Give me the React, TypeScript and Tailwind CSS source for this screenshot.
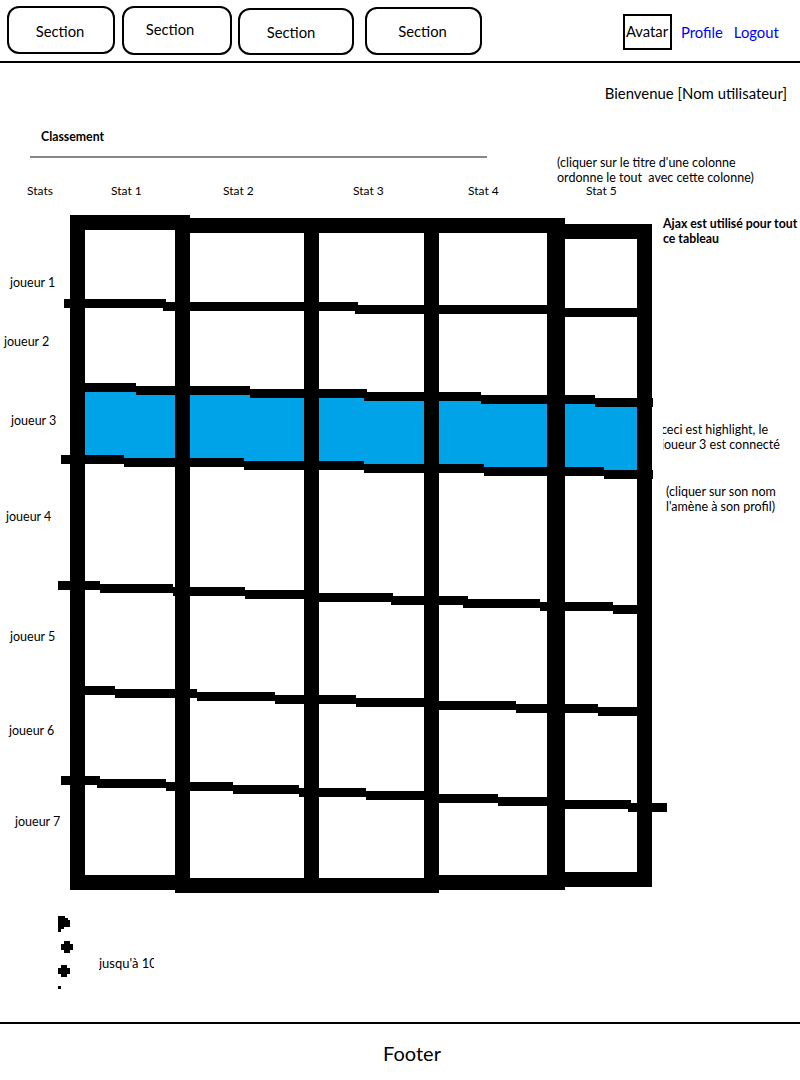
const bars: [number, number, number, number][] = [
  // outer frame, top
  [70, 215, 120, 15], [190, 218, 375, 15], [565, 224, 87, 15],
  // outer frame, bottom
  [70, 875, 105, 15], [175, 878, 264, 15], [439, 875, 126, 15], [565, 872, 87, 15],
  // verticals
  [70, 215, 15, 675], [175, 215, 15, 678], [304, 218, 15, 675], [424, 218, 15, 675], [547, 218, 18, 672], [637, 224, 15, 663],
  // row 1
  [64, 299, 102, 9], [163, 302, 195, 9], [355, 305, 192, 9], [565, 308, 72, 9],
  // row 2
  [85, 383, 51, 9], [136, 386, 114, 9], [250, 389, 117, 9], [364, 392, 117, 9], [481, 395, 66, 9], [565, 395, 30, 9], [595, 398, 58, 9],
  // row 3
  [61, 455, 63, 9], [124, 458, 120, 9], [244, 461, 120, 9], [364, 464, 120, 9], [484, 467, 63, 9], [565, 467, 39, 9], [604, 470, 49, 9],
  // row 4
  [58, 581, 42, 9], [100, 584, 73, 9], [173, 587, 72, 9], [245, 590, 60, 9], [319, 593, 74, 9], [391, 596, 77, 9], [463, 599, 77, 9], [540, 602, 73, 9], [613, 605, 24, 9],
  // row 5
  [85, 686, 30, 9], [115, 689, 65, 9], [190, 689, 7, 9], [197, 692, 78, 9], [275, 695, 81, 9], [356, 698, 69, 9], [439, 701, 77, 9], [516, 704, 82, 9], [598, 707, 39, 9],
  // row 6
  [61, 776, 39, 9], [97, 779, 69, 9], [166, 782, 67, 9], [233, 785, 66, 9], [299, 788, 67, 9], [366, 791, 58, 9], [439, 794, 59, 9], [498, 797, 49, 9], [565, 800, 66, 9], [628, 803, 39, 9],
];

function Blob({ x, y }: { x: number; y: number }) {
  return <path d={`M${x + 3} ${y}h6v3h3v6h-3v3h-6v-3h-3v-6h3z`} fill="#000" />;
}

function Grid() {
  return (
    <svg
      className="absolute left-0 top-[-63px]"
      width="800"
      height="1022"
      viewBox="0 0 800 1022"
      shapeRendering="crispEdges"
    >
      <polygon points="85,388 637,402 637,474.5 85,459.5" fill="#00a2e8" />
      {bars.map(([x, y, w, h], i) => (
        <rect key={i} x={x} y={y} width={w} height={h} fill="#000" />
      ))}
      <polygon points="58,916 65,916 65,918 68,918 68,920 70,920 70,927 64,927 64,929 61,929 61,932 58,932" fill="#000" />
      <Blob x={61} y={941} />
      <Blob x={58} y={965} />
      <rect x={58} y={986} width={3} height={3} fill="#000" />
    </svg>
  );
}

export default function App() {
  return (
    <div className="w-[800px] h-[1080px] bg-white text-black overflow-hidden font-['Lato',sans-serif] flex flex-col">
      <header className="h-[63px] shrink-0 border-b-2 border-black flex items-start text-[14.8px] leading-5">
        <a className="ml-[7px] mt-[6px] w-[108px] h-[48px] border-2 border-black rounded-[12px] flex items-center justify-center pr-[2px] pt-[2px]">Section</a>
        <a className="ml-[7px] mt-[6px] w-[110px] h-[49px] border-2 border-black rounded-[12px] flex items-center justify-center pr-[14px] pb-[3px]">Section</a>
        <a className="ml-[6px] mt-[8px] w-[116px] h-[47px] border-2 border-black rounded-[12px] flex items-center justify-center pr-[10px]">Section</a>
        <a className="ml-[11px] mt-[7px] w-[117px] h-[48px] border-2 border-black rounded-[12px] flex items-center justify-center pr-[2px]">Section</a>
        <div className="ml-[141px] mt-[14px] w-[49px] h-[36px] border-2 border-black flex items-center justify-center pb-[3px] pr-[1px]">Avatar</div>
        <a className="ml-[9px] mt-[22px] text-[#0000ff]">Profile</a>
        <a className="ml-[11px] mt-[22px] text-[#0000ff]">Logout</a>
      </header>

      <main className="relative flex-1 flex flex-col text-[12.5px] leading-4">
        <Grid />
        <div className="relative flex justify-end pt-[20px] pr-[13px] text-[14.9px] leading-5">
          <p>Bienvenue [Nom utilisateur]</p>
        </div>

        <div className="relative mt-[26px] flex items-start">
          <div className="w-[557px] pl-[30px]">
            <p className="ml-[11px] font-bold text-[12.3px]">Classement</p>
            <div className="mt-[11px] w-[457px] h-[2px] bg-[#888888]" />
          </div>
          <p className="mt-[26px] leading-[15px] whitespace-pre">{"(cliquer sur le titre d'une colonne\nordonne le tout  avec cette colonne)"}</p>
        </div>

        <div className="relative -mt-[2px] pl-[27px] grid grid-cols-[84px_112px_130px_115px_118px_auto] text-[12px]">
          <span>Stats</span>
          <span>Stat 1</span>
          <span>Stat 2</span>
          <span>Stat 3</span>
          <span>Stat 4</span>
          <span>Stat 5</span>
        </div>

        <div className="relative flex items-start">
          <div className="w-[663px] pt-[76px] flex flex-col items-start">
            <span className="ml-[10px]">joueur 1</span>
            <span className="ml-[4px] mt-[43px]">joueur 2</span>
            <span className="ml-[11px] mt-[63px]">joueur 3</span>
            <span className="ml-[6px] mt-[80px]">joueur 4</span>
            <span className="ml-[10px] mt-[104px]">joueur 5</span>
            <span className="ml-[9px] mt-[78px]">joueur 6</span>
            <span className="ml-[15px] mt-[75px]">joueur 7</span>
            <div className="ml-[99px] mt-[125px] w-[55px] overflow-hidden">
              <span className="whitespace-nowrap text-[13px]">jusqu'à 10</span>
            </div>
          </div>
          <div className="w-[137px] pt-[17px] flex flex-col leading-[15px]">
            <p className="font-bold text-[12.3px] whitespace-pre">{"Ajax est utilisé pour tout\nce tableau"}</p>
            <div className="mt-[176px] overflow-hidden">
              <p className="-ml-[2px] whitespace-pre">{"ceci est highlight, le\njoueur 3 est connecté"}</p>
            </div>
            <p className="ml-[3px] mt-[32px] whitespace-pre">{"(cliquer sur son nom\nl'amène à son profil)"}</p>
          </div>
        </div>
      </main>

      <footer className="h-[58px] shrink-0 border-t-2 border-black flex items-center justify-center pl-[24px] pt-[2px] text-[20px]">Footer</footer>
    </div>
  );
}
